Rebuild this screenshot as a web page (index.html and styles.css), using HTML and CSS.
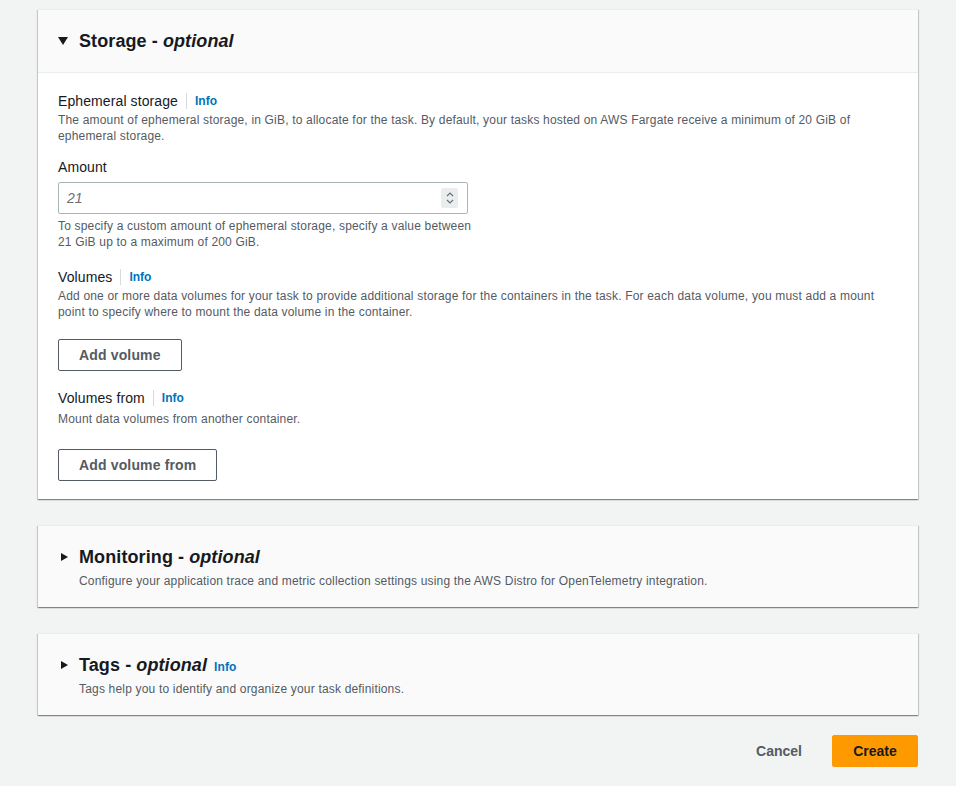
FILE: index.html
```html
<!DOCTYPE html>
<html>
<head>
<meta charset="utf-8">
<link rel="stylesheet" href="styles.css">
</head>
<body>
<div class="page">
  <section class="card">
    <div class="card-header open">
      <h2 class="title"><span class="caret down"></span>Storage - <em>optional</em></h2>
    </div>
    <div class="card-body">
      <div class="field">
        <div class="label-row"><span class="label">Ephemeral storage</span><span class="sep"></span><a class="info">Info</a></div>
        <p class="desc">The amount of ephemeral storage, in GiB, to allocate for the task. By default, your tasks hosted on AWS Fargate receive a minimum of 20 GiB of ephemeral storage.</p>
      </div>
      <div class="field amount">
        <div class="label-row"><span class="label">Amount</span></div>
        <div class="input">
          <span class="placeholder">21</span>
          <span class="spinner">
            <svg width="10" height="16" viewBox="0 0 10 16"><path d="M2 6 L5 3 L8 6" fill="none" stroke="#687078" stroke-width="1.2"/><path d="M2 10 L5 13 L8 10" fill="none" stroke="#687078" stroke-width="1.2"/></svg>
          </span>
        </div>
        <p class="desc hint">To specify a custom amount of ephemeral storage, specify a value between 21 GiB up to a maximum of 200 GiB.</p>
      </div>
      <div class="field volumes">
        <div class="label-row"><span class="label">Volumes</span><span class="sep"></span><a class="info">Info</a></div>
        <p class="desc">Add one or more data volumes for your task to provide additional storage for the containers in the task. For each data volume, you must add a mount point to specify where to mount the data volume in the container.</p>
        <button class="btn">Add volume</button>
      </div>
      <div class="field volumes-from">
        <div class="label-row"><span class="label">Volumes from</span><span class="sep"></span><a class="info">Info</a></div>
        <p class="desc">Mount data volumes from another container.</p>
        <button class="btn">Add volume from</button>
      </div>
    </div>
  </section>

  <section class="card collapsed">
    <div class="card-header">
      <h2 class="title"><span class="caret right"></span>Monitoring - <em>optional</em></h2>
      <p class="sub">Configure your application trace and metric collection settings using the AWS Distro for OpenTelemetry integration.</p>
    </div>
  </section>

  <section class="card collapsed">
    <div class="card-header">
      <h2 class="title"><span class="caret right"></span>Tags - <em>optional</em><a class="info head-info">Info</a></h2>
      <p class="sub">Tags help you to identify and organize your task definitions.</p>
    </div>
  </section>

  <div class="actions">
    <button class="link-btn">Cancel</button>
    <button class="primary">Create</button>
  </div>
</div>
</body>
</html>
```

FILE: styles.css
```css
* { box-sizing: border-box; }
html, body { margin: 0; padding: 0; }
body {
  background: #f2f3f3;
  font-family: "Liberation Sans", Arial, sans-serif;
  color: #16191f;
  width: 956px;
  height: 786px;
  overflow: hidden;
}
.page {
  padding: 9px 38px 0 38px;
  display: flex;
  flex-direction: column;
  gap: 26px;
}
.card {
  background: #fff;
  border-top: 1px solid #eaeded;
  box-shadow: 0 1px 1px 0 rgba(0,28,36,0.3), 1px 1px 1px 0 rgba(0,28,36,0.15), -1px 1px 1px 0 rgba(0,28,36,0.15);
}
.card-header {
  background: #fafafa;
  padding: 19px 20px 0 20px;
}
.card-header.open {
  height: 63px;
  border-bottom: 1px solid #eaeded;
}
.collapsed .card-header {
  height: 81px;
  padding-top: 19px;
}
.title {
  margin: 0;
  font-size: 18px;
  line-height: 24px;
  height: 24px;
  font-weight: 700;
  display: flex;
  align-items: center;
  letter-spacing: 0.1px;
}
.title em {
  font-style: italic;
  margin-left: 5px;
}
.caret {
  display: inline-block;
  width: 0; height: 0;
}
.caret.down {
  border-left: 5.5px solid transparent;
  border-right: 5.5px solid transparent;
  border-top: 8px solid #16191f;
  margin-right: 11px;
}
.caret.right {
  border-top: 4.5px solid transparent;
  border-bottom: 4.5px solid transparent;
  border-left: 7px solid #16191f;
  margin-left: 3px;
  margin-right: 11px;
}
.sub {
  margin: 4px 0 0 21px;
  font-size: 12px;
  line-height: 16px;
  color: #545b64;
  letter-spacing: 0.18px;
}
.card-body {
  padding: 17px 20px 18px 20px;
}
.label-row {
  display: flex;
  align-items: center;
  height: 22px;
}
.label {
  font-size: 14px;
  line-height: 22px;
  color: #16191f;
  letter-spacing: 0.1px;
}
.sep {
  display: inline-block;
  width: 1px;
  height: 16px;
  background: #d5dbdb;
  margin: 0 8px 0 8px;
}
.info {
  color: #0073bb;
  font-weight: 700;
  font-size: 12px;
  cursor: pointer;
}
.head-info { margin-left: 7px; margin-top: 3px; }
.desc {
  margin: 0;
  font-size: 12px;
  line-height: 16px;
  color: #545b64;
  letter-spacing: 0.18px;
}
.amount { margin-top: 12px; }
.input {
  margin-top: 4px;
  width: 410px;
  height: 32px;
  border: 1px solid #aab7b8;
  border-radius: 2px;
  display: flex;
  align-items: center;
  justify-content: space-between;
  padding: 0 9px 0 8px;
}
.placeholder {
  font-style: italic;
  color: #687078;
  font-size: 14px;
}
.spinner {
  width: 17px;
  height: 20px;
  background: #eaeded;
  border-radius: 2px;
  display: flex;
  align-items: center;
  justify-content: center;
}
.hint { margin-top: 5px; width: 420px; line-height: 15.5px; }
.volumes { margin-top: 16px; }
.volumes-from { margin-top: 16px; }
.volumes-from .desc { margin-top: 2px; }
.btn {
  display: inline-block;
  height: 32px;
  padding: 0 20px;
  background: #fff;
  border: 1px solid #545b64;
  border-radius: 2px;
  font-family: "Liberation Sans", Arial, sans-serif;
  font-weight: 700;
  font-size: 14px;
  color: #545b64;
  letter-spacing: 0.15px;
}
.volumes .btn { margin-top: 19px; }
.volumes-from .btn { margin-top: 22px; }
.actions {
  display: flex;
  justify-content: flex-end;
  align-items: center;
  gap: 30px;
  margin-top: -6px;
}
.link-btn {
  background: none;
  border: none;
  font-family: "Liberation Sans", Arial, sans-serif;
  font-weight: 700;
  font-size: 14px;
  color: #545b64;
  padding: 0;
}
.primary {
  width: 86px;
  height: 32px;
  background: #ff9900;
  border: 1px solid #ff9900;
  border-radius: 2px;
  font-family: "Liberation Sans", Arial, sans-serif;
  font-weight: 700;
  font-size: 14px;
  color: #16191f;
  padding: 0;
}
```
